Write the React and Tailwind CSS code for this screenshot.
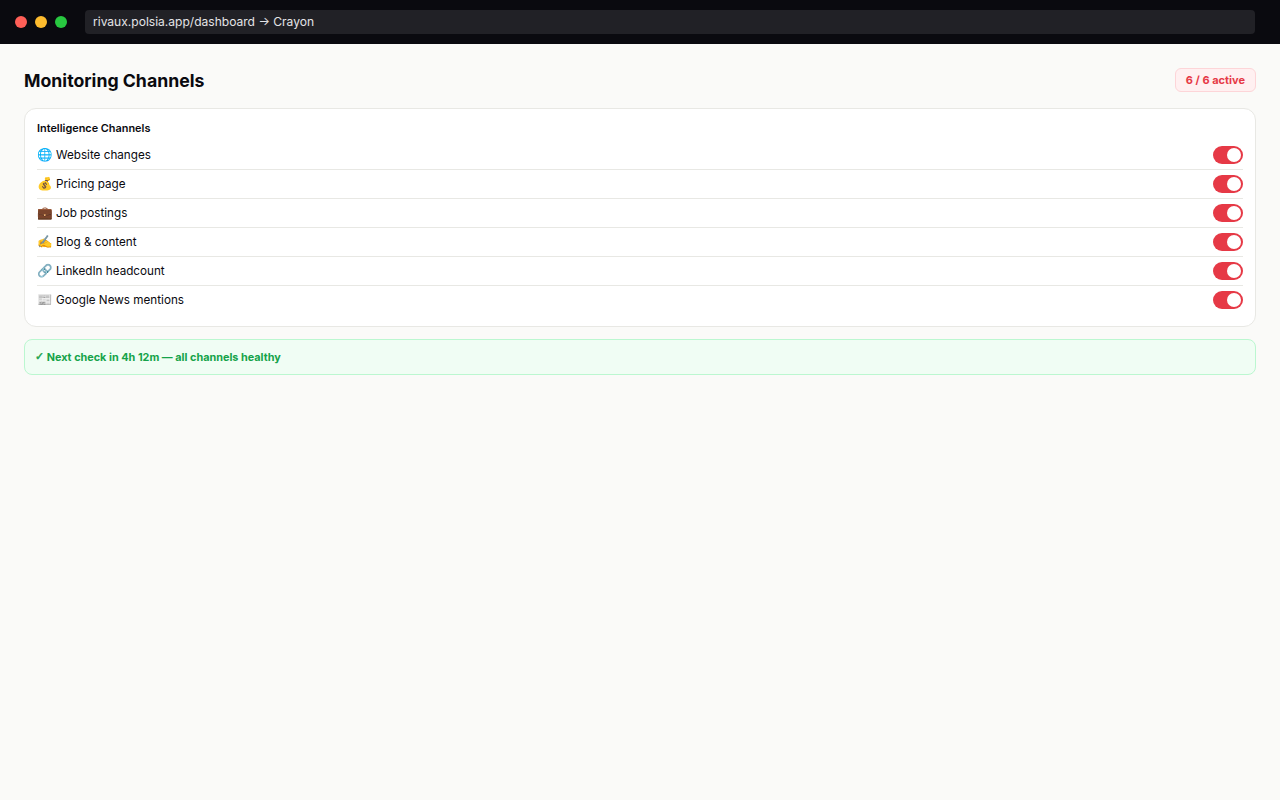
const channels = [
  { icon: "🌐", name: "Website changes" },
  { icon: "💰", name: "Pricing page" },
  { icon: "💼", name: "Job postings" },
  { icon: "✍️", name: "Blog & content" },
  { icon: "🔗", name: "LinkedIn headcount" },
  { icon: "📰", name: "Google News mentions" },
];

const Toggle = () => (
  <div className="w-[30px] h-[18px] rounded-full bg-[#e63946] flex items-center justify-end px-[2px]">
    <div className="w-[14px] h-[14px] rounded-full bg-white"></div>
  </div>
);

export default function App() {
  return (
    <div className="min-h-[800px] bg-[#fafaf8] font-['Inter',sans-serif] text-[#0a0a0f]">
      {/* Browser bar */}
      <div className="h-11 bg-[#0a0a0f] flex items-center pl-[15px] pr-[25px]">
        <div className="flex gap-2">
          <span className="w-3 h-3 rounded-full bg-[#ff5f57]"></span>
          <span className="w-3 h-3 rounded-full bg-[#febc2e]"></span>
          <span className="w-3 h-3 rounded-full bg-[#28c840]"></span>
        </div>
        <div className="ml-[18px] flex-1 h-6 rounded bg-[#212126] px-2 flex items-center text-[12.05px] text-[#e4e4e7]">
          rivaux.polsia.app/dashboard → Crayon
        </div>
      </div>

      <div className="px-6 pt-6">
        {/* Header */}
        <div className="flex items-center justify-between mb-4">
          <h1 className="text-[17.7px] font-bold leading-[22px] pt-[2px]">Monitoring Channels</h1>
          <span className="h-6 px-[10px] flex items-center rounded-md bg-[#fff0f1] border border-[#fdd5d8] text-[#e63946] text-[11px] font-bold">
            6 / 6 active
          </span>
        </div>

        {/* Channels card */}
        <div className="bg-white border border-[#e8e8e4] rounded-xl px-3 pt-[13px] pb-[11px]">
          <div className="text-[10.9px] font-semibold leading-[12px] mb-[7px]">Intelligence Channels</div>
          {channels.map((c, i) => (
            <div
              key={c.name}
              className={`flex items-center justify-between h-[29px] border-b ${i < channels.length - 1 ? "border-[#e8e8e4]" : "border-transparent"}`}
            >
              <div className="flex items-center gap-[5px] text-[11.7px] leading-4">
                <span className="w-[14px] text-[12.5px] leading-4">{c.icon}</span>
                <span>{c.name}</span>
              </div>
              <Toggle />
            </div>
          ))}
        </div>

        {/* Status */}
        <div className="mt-3 h-9 px-[10px] flex items-center bg-[#f0fdf4] border border-[#bbf7d0] rounded-lg text-[#16a34a] text-[10.85px] font-bold">
          <span className="font-['DejaVu_Sans',sans-serif] [-webkit-text-stroke:0.5px_#16a34a]">✓</span>&nbsp;Next check in 4h 12m — all channels healthy
        </div>
      </div>
    </div>
  );
}
